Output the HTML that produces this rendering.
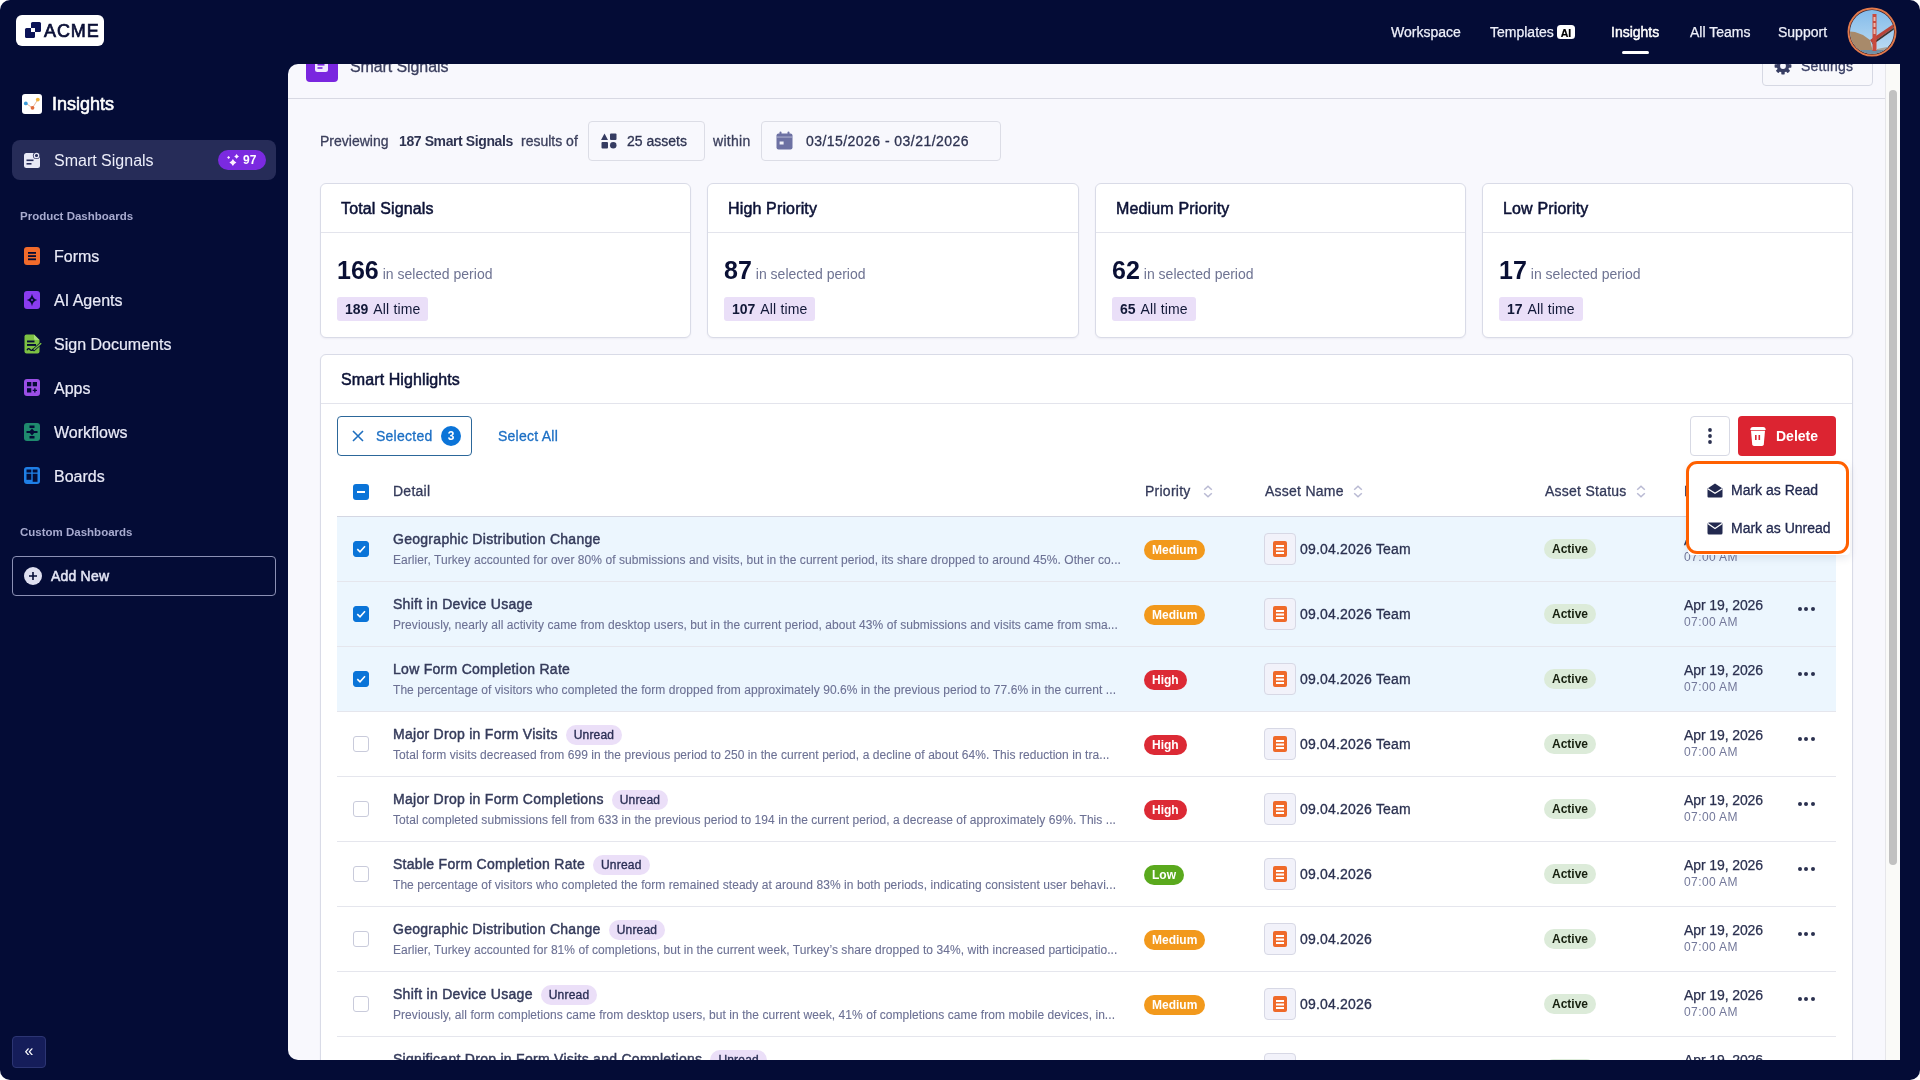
<!DOCTYPE html>
<html><head><meta charset="utf-8">
<style>
*{box-sizing:border-box;margin:0;padding:0}
html,body{width:1920px;height:1080px;overflow:hidden;background:#fff;font-family:"Liberation Sans",sans-serif}
#app{position:absolute;left:0;top:0;width:1920px;height:1080px;background:#040c36;border-radius:10px;overflow:hidden;will-change:transform}
.abs{position:absolute}
.m{-webkit-text-stroke:0.3px currentColor}
.nav{position:absolute;top:24px;-webkit-text-stroke:0.25px currentColor;font-size:14px;color:#eef0fa;white-space:nowrap;line-height:16px}
.side-item{position:absolute;left:0;width:288px;height:44px}
.side-item .ic{position:absolute;left:24px;top:13px;width:16px;height:18px;border-radius:3px}
.side-item .tx{position:absolute;left:54px;top:14px;-webkit-text-stroke:0.2px currentColor;font-size:16px;color:#e9eaf7;line-height:18px;white-space:nowrap}
.sec{position:absolute;left:20px;font-size:11.5px;font-weight:700;color:#a8abcf;white-space:nowrap}
#panel{position:absolute;left:288px;top:64px;width:1612px;height:996px;background:#f8f8fd;border-radius:10px 0 0 10px;overflow:hidden}
#pin{position:absolute;left:-288px;top:-64px;width:1920px;height:1080px}
.card{position:absolute;background:#fff;border:1px solid #d9dbe7;border-radius:6px;box-shadow:0 1px 2px rgba(20,25,70,.05)}
.stat .t{position:absolute;left:20px;top:16px;font-size:16px;color:#0c1236;white-space:nowrap;letter-spacing:0.15px;-webkit-text-stroke:0.5px currentColor}
.stat .hd{position:absolute;left:0;right:0;top:48px;border-top:1px solid #e3e4ec}
.stat .num{position:absolute;left:16px;top:71px;font-size:25px;font-weight:700;color:#0a1035;white-space:nowrap;line-height:30px}
.stat .num span{font-size:14px;font-weight:400;color:#6e7392;margin-left:4px}
.stat .pill{position:absolute;left:16px;top:113px;height:24px;padding:0 8px 0 8px;letter-spacing:0.15px;background:#eadff8;border-radius:3px;font-size:14px;line-height:24px;color:#121838;white-space:nowrap}
.stat .pill b{font-weight:700;margin-right:5px;letter-spacing:0}
.row{position:absolute;left:337px;width:1499px;height:65px;border-bottom:1px solid #e5e6ed}
.row.sel{background:#ecf6fe}
.cb{position:absolute;left:16px;top:24px;width:16px;height:16px;border-radius:3px;border:1.5px solid #c9cbdb;background:#fff}
.row.sel .cb{background:#0a74d8;border-color:#0a74d8}
.row .ti{position:absolute;left:56px;top:13px;font-size:14px;color:#353b5b;white-space:nowrap;line-height:18px;letter-spacing:0.28px;-webkit-text-stroke:0.45px currentColor}
.row .ds{position:absolute;left:56px;top:35px;width:735px;overflow:hidden;font-size:12px;color:#6c7194;white-space:nowrap;line-height:16px;letter-spacing:0.06px;-webkit-text-stroke:0.1px currentColor}
.unread{display:inline-block;margin-left:8px;height:20px;padding:0 8px;border-radius:10px;background:#ebdff8;font-size:12px;color:#2b2f55;line-height:21px;vertical-align:0px;letter-spacing:0.2px;-webkit-text-stroke:0.35px currentColor}
.prio{position:absolute;left:807px;top:23px;height:20px;border-radius:10px;color:#fff;font-size:12px;font-weight:700;line-height:20px;padding:0 8px;white-space:nowrap}
.pm{background:#f2991c}.ph{background:#dc2a35}.pl{background:#5aa91d}
.asset{position:absolute;left:927px;top:16px;width:32px;height:32px;border:1px solid #d7d8e5;background:#f2f2fa;border-radius:4px}
.asset i{position:absolute;left:8px;top:7px;width:14px;height:16px;background:#ef6a2a;border-radius:2px}
.asset i:before{content:"";position:absolute;left:3px;top:3.5px;width:8px;height:2px;background:#fff;box-shadow:0 3.5px 0 #fff,0 7px 0 #fff}
.an{position:absolute;left:963px;top:24px;letter-spacing:0.2px;-webkit-text-stroke:0.3px currentColor;font-size:14px;color:#2b3150;white-space:nowrap;line-height:16px}
.act{position:absolute;left:1207px;top:22px;width:52px;height:20px;border-radius:10px;background:#dcebd9;font-size:12px;font-weight:700;color:#17200f;text-align:center;line-height:20px}
.dt{position:absolute;left:1347px;top:15px;letter-spacing:-0.1px;-webkit-text-stroke:0.25px currentColor;font-size:14px;color:#2b3150;white-space:nowrap;line-height:16px}
.tm{position:absolute;left:1347px;top:33px;font-size:12px;color:#73789a;white-space:nowrap;line-height:14px;letter-spacing:0.4px}
.dots{position:absolute;left:1461px;top:25px;width:17px;height:4px}
.dots b{position:absolute;top:0;width:3.8px;height:3.8px;border-radius:2px;background:#2b3150}
.th{position:absolute;top:483px;letter-spacing:0.25px;-webkit-text-stroke:0.3px currentColor;font-size:14px;color:#343a5a;white-space:nowrap;line-height:16px}
.sort{position:absolute;width:10px;height:13px}
</style></head><body>
<div id="app">
  <!-- logo -->
  <div class="abs" style="left:16px;top:15px;width:88px;height:31px;background:#fff;border-radius:6px"></div>
  <svg class="abs" style="left:24px;top:21px" width="20" height="18" viewBox="0 0 20 18">
    <rect x="7" y="1" width="10" height="10" rx="1.5" fill="#0c1457"/>
    <rect x="1" y="7" width="10" height="10" rx="1.5" fill="#0c1457"/>
    <rect x="7" y="7" width="4" height="4" fill="#fff"/>
  </svg>
  <div class="abs" style="left:44px;top:20px;font-size:18px;color:#0a0f36;letter-spacing:0.9px;line-height:22px;-webkit-text-stroke:0.7px #0a0f36">ACME</div>

  <!-- top nav -->
  <div class="nav" style="left:1391px">Workspace</div>
  <div class="nav" style="left:1490px">Templates</div>
  <div class="abs" style="left:1557px;top:24.5px;width:18px;height:14.5px;background:#fff;border-radius:3.5px;font-size:10.5px;font-weight:700;color:#000;text-align:center;line-height:16px;-webkit-text-stroke:0.2px #000">AI</div>
  <div class="nav" style="left:1611px;font-size:14px;color:#fff;-webkit-text-stroke:0.45px #fff">Insights</div>
  <div class="abs" style="left:1622px;top:51px;width:27px;height:3px;background:#fff;border-radius:2px"></div>
  <div class="nav" style="left:1690px">All Teams</div>
  <div class="nav" style="left:1778px">Support</div>
  <!-- avatar -->
  <svg class="abs" style="left:1847px;top:7px" width="50" height="50" viewBox="0 0 50 50">
    <defs><clipPath id="av"><circle cx="25" cy="25" r="22"/></clipPath>
    <linearGradient id="sky" x1="0" y1="0" x2="0" y2="1"><stop offset="0" stop-color="#7fb9ea"/><stop offset="1" stop-color="#c4e0f3"/></linearGradient></defs>
    <circle cx="25" cy="25" r="24.5" fill="#e27a4c"/>
    <circle cx="25" cy="25" r="22.6" fill="#3a1a20"/>
    <g clip-path="url(#av)">
      <rect width="50" height="50" fill="url(#sky)"/>
      <polygon points="0,24 8,25 16,28 23,33 26,45 0,45" fill="#a88a6a"/>
      <polygon points="30,42 40,40 50,41 50,45 30,45" fill="#a9a49a"/>
      <rect x="0" y="43" width="50" height="7" fill="#6c8fa5"/>
      <polygon points="23,33 48,16 49,19 25,36" fill="#b8443a"/>
      <polygon points="25,36 49,19 49,21 26,37.5" fill="#40302c"/>
      <rect x="25.5" y="7" width="4" height="37" fill="#c94a3e"/>
      <rect x="26.5" y="10" width="2" height="4" fill="#e9b9b0"/>
      <rect x="26.5" y="16" width="2" height="4" fill="#e9b9b0"/>
      <rect x="26.5" y="22" width="2" height="5" fill="#e9b9b0"/>
    </g>
  </svg>

  <!-- sidebar -->
  <div class="abs" style="left:22px;top:94px;width:20px;height:20px;background:#fff;border-radius:3px">
    <svg width="20" height="20" viewBox="0 0 20 20"><path d="M3.8 9.4 L10.5 13.8 L15.8 5.6" stroke="#e9b9a0" stroke-width="1" fill="none"/><circle cx="3.8" cy="9.4" r="1.9" fill="#3a9ad9"/><circle cx="10.5" cy="13.8" r="1.9" fill="#e06a3a"/><circle cx="15.8" cy="5.6" r="1.9" fill="#f0b23a"/></svg>
  </div>
  <div class="abs" style="left:52px;top:94px;font-size:18px;color:#fff;line-height:20px;-webkit-text-stroke:0.6px #fff">Insights</div>

  <div class="abs" style="left:12px;top:140px;width:264px;height:40px;background:#262c58;border-radius:8px"></div>
  <svg class="abs" style="left:23px;top:151px" width="18" height="18" viewBox="0 0 18 18">
    <rect x="1" y="2" width="16" height="15" rx="2.5" fill="#e8e9f6"/>
    <circle cx="13.5" cy="4.5" r="3.6" fill="#262c58"/>
    <circle cx="13.5" cy="4.5" r="2.2" fill="none" stroke="#e8e9f6" stroke-width="1.3"/>
    <rect x="3.5" y="8.5" width="7" height="1.6" fill="#262c58"/>
    <rect x="3.5" y="12" width="5" height="1.6" fill="#262c58"/>
  </svg>
  <div class="abs" style="left:54px;top:152px;font-size:16px;color:#eceefa;line-height:18px">Smart Signals</div>
  <div class="abs" style="left:218px;top:150px;width:48px;height:20px;background:#7b2ae0;border-radius:10px"></div>
  <svg class="abs" style="left:225px;top:153px" width="14" height="14" viewBox="0 0 14 14"><path d="M3.6 3.0 Q4.35 3.75 5.1 4.5 Q4.35 5.25 3.6 6.0 Q2.85 5.25 2.1 4.5 Q2.85 3.75 3.6 3.0Z M11.6 1.0 Q12.44 2.56 14.0 3.4 Q12.44 4.24 11.6 5.8 Q10.76 4.24 9.2 3.4 Q10.76 2.56 11.6 1.0Z M7.9 6.1 Q8.950000000000001 8.549999999999999 11.4 9.6 Q8.950000000000001 10.65 7.9 13.1 Q6.8500000000000005 10.65 4.4 9.6 Q6.8500000000000005 8.549999999999999 7.9 6.1Z" fill="#fdf0ff"/></svg>
  <div class="abs" style="left:243px;top:153px;font-size:12px;font-weight:700;color:#fff;line-height:14px">97</div>

  <div class="sec" style="top:210px">Product Dashboards</div>

  <div class="side-item" style="top:234px"><div class="ic" style="background:#f26b2b"><svg width="16" height="18" viewBox="0 0 16 18"><rect x="4" y="5" width="8" height="1.8" fill="#040c36"/><rect x="4" y="8.2" width="8" height="1.8" fill="#040c36"/><rect x="4" y="11.4" width="8" height="1.8" fill="#040c36"/></svg></div><div class="tx">Forms</div></div>
  <div class="side-item" style="top:278px"><div class="ic" style="background:#8a3cf0"><svg width="16" height="18" viewBox="0 0 16 18"><path d="M8 2.8 Q8.9 8.1 13.3 9 Q8.9 9.9 8 15.2 Q7.1 9.9 2.7 9 Q7.1 8.1 8 2.8Z" fill="#040c36"/><circle cx="8" cy="9" r="0.9" fill="#8a3cf0"/></svg></div><div class="tx">AI Agents</div></div>
  <div class="side-item" style="top:322px"><svg class="abs" style="left:24px;top:12px" width="19" height="20" viewBox="0 0 19 20"><path d="M2.5 0.5 H10 L15.5 6 V17.5 Q15.5 19.5 13.5 19.5 H2.5 Q0.5 19.5 0.5 17.5 V2.5 Q0.5 0.5 2.5 0.5Z" fill="#7cc143"/><path d="M10 0.5 V4.5 Q10 6 11.5 6 H15.5" fill="#a6dd78"/><rect x="3" y="6.5" width="7.5" height="1.9" fill="#040c36"/><rect x="3" y="10" width="9" height="1.9" fill="#040c36"/><path d="M3 16.3 Q4.5 13.5 6 15.5 T9.5 15" stroke="#040c36" stroke-width="1.3" fill="none"/><path d="M9 16.5 L17.5 9" stroke="#040c36" stroke-width="3"/><path d="M9.8 15.8 L17.2 9.3" stroke="#7cc143" stroke-width="1.4"/></svg><div class="tx">Sign Documents</div></div>
  <div class="side-item" style="top:366px"><div class="ic" style="background:#9b4fe6;height:17px;top:13px"><svg width="16" height="17" viewBox="0 0 16 17"><rect x="3" y="3" width="4.3" height="4.3" fill="#040c36"/><rect x="8.7" y="3" width="4.3" height="4.3" fill="#040c36"/><rect x="3" y="9.2" width="4.3" height="4.3" fill="#040c36"/><path d="M10.85 9.2 V13.5 M8.7 11.35 H13" stroke="#040c36" stroke-width="1.4"/></svg></div><div class="tx">Apps</div></div>
  <div class="side-item" style="top:410px"><div class="ic" style="background:#1f8a6e"><svg width="16" height="18" viewBox="0 0 16 18"><rect x="5.5" y="2.5" width="5" height="2.5" fill="#040c36"/><rect x="2.5" y="8" width="11" height="2" fill="#040c36"/><path d="M8 5.5 L11 9 L8 12.5 L5 9Z" fill="#040c36"/><rect x="5.5" y="13" width="5" height="2.5" fill="#040c36"/></svg></div><div class="tx">Workflows</div></div>
  <div class="side-item" style="top:454px"><div class="ic" style="background:#1f7fe6;height:17px"><svg width="16" height="17" viewBox="0 0 16 17"><rect x="2.5" y="2.5" width="4.8" height="3" fill="#040c36"/><rect x="8.7" y="2.5" width="4.8" height="3" fill="#040c36"/><rect x="2.5" y="6.8" width="4.8" height="6" fill="#040c36"/><rect x="8.7" y="6.8" width="4.8" height="8" fill="#040c36"/></svg></div><div class="tx">Boards</div></div>

  <div class="sec" style="top:526px">Custom Dashboards</div>
  <div class="abs" style="left:12px;top:556px;width:264px;height:40px;border:1px solid #8b90b4;border-radius:4px"></div>
  <svg class="abs" style="left:24px;top:567px" width="18" height="18" viewBox="0 0 18 18"><circle cx="9" cy="9" r="9" fill="#dfe0f0"/><path d="M9 5 V13 M5 9 H13" stroke="#040c36" stroke-width="1.6"/></svg>
  <div class="abs" style="left:51px;top:568px;font-size:14px;color:#e3e5f5;line-height:16px;letter-spacing:0.2px;-webkit-text-stroke:0.5px #e3e5f5">Add New</div>

  <div class="abs" style="left:12px;top:1036px;width:34px;height:32px;background:#151d5a;border:1px solid #2c3573;border-radius:4px;color:#fff;font-size:16px;text-align:center;line-height:28px">&laquo;</div>

  <!-- main panel -->
  <div id="panel"><div id="pin">
    <!-- header -->
    <div class="abs" style="left:288px;top:0;width:1597px;height:99px;border-bottom:1px solid #d8d9e3"></div>
    <div class="abs" style="left:306px;top:50px;width:32px;height:32px;background:#7a26df;border-radius:4px"></div>
    <svg class="abs" style="left:313px;top:57px" width="18" height="18" viewBox="0 0 18 18"><rect x="2" y="2" width="13" height="13" rx="2.5" fill="#f0e7ff"/><rect x="4.5" y="7" width="7" height="1.6" fill="#7a26df"/><rect x="4.5" y="10.2" width="5" height="1.6" fill="#7a26df"/></svg>
    <div class="abs m" style="left:350px;top:57px;font-size:16px;color:#3a3e5e;line-height:20px;letter-spacing:-0.1px">Smart Signals</div>
    <div class="abs" style="left:1762px;top:40px;width:111px;height:46px;border:1px solid #d6d8e3;border-radius:4px;background:#f8f8fc"></div>
    <svg class="abs" style="left:1774px;top:57px" width="18" height="18" viewBox="0 0 18 18"><rect x="7.3" y="0.6" width="3.4" height="3.4" rx="0.6" fill="#373d63" transform="rotate(0 9 9)"/><rect x="7.3" y="0.6" width="3.4" height="3.4" rx="0.6" fill="#373d63" transform="rotate(45 9 9)"/><rect x="7.3" y="0.6" width="3.4" height="3.4" rx="0.6" fill="#373d63" transform="rotate(90 9 9)"/><rect x="7.3" y="0.6" width="3.4" height="3.4" rx="0.6" fill="#373d63" transform="rotate(135 9 9)"/><rect x="7.3" y="0.6" width="3.4" height="3.4" rx="0.6" fill="#373d63" transform="rotate(180 9 9)"/><rect x="7.3" y="0.6" width="3.4" height="3.4" rx="0.6" fill="#373d63" transform="rotate(225 9 9)"/><rect x="7.3" y="0.6" width="3.4" height="3.4" rx="0.6" fill="#373d63" transform="rotate(270 9 9)"/><rect x="7.3" y="0.6" width="3.4" height="3.4" rx="0.6" fill="#373d63" transform="rotate(315 9 9)"/><circle cx="9" cy="9" r="6.3" fill="#373d63"/><circle cx="9" cy="9" r="2.9" fill="#f8f8fd"/></svg>
    <div class="abs m" style="left:1801px;top:57px;font-size:14px;color:#373d63;line-height:18px;letter-spacing:0.2px">Settings</div>
    <!-- scrollbar -->
    <div class="abs" style="left:1885px;top:64px;width:15px;height:996px;background:#fafaf8;border-left:1px solid #e6e6ea"></div>
    <div class="abs" style="left:1889px;top:90px;width:8px;height:775px;background:#c1c1c1;border-radius:4px"></div>

    <!-- preview row -->
    <div class="abs m" style="left:320px;top:133px;font-size:14px;color:#3b3f5c;line-height:16px;white-space:nowrap">Previewing</div>
    <div class="abs" style="left:399px;top:133px;font-size:14px;font-weight:700;color:#2f3452;line-height:16px;white-space:nowrap;letter-spacing:-0.4px">187 Smart Signals</div>
    <div class="abs m" style="left:521px;top:133px;font-size:14px;color:#3b3f5c;line-height:16px;white-space:nowrap">results of</div>
    <div class="abs" style="left:588px;top:121px;width:117px;height:40px;border:1px solid #dcdde6;border-radius:4px"></div>
    <svg class="abs" style="left:601px;top:133px" width="16" height="16" viewBox="0 0 16 16"><path d="M3.5 0.5 L7 7 H0Z" fill="#363c62"/><rect x="9" y="0.5" width="6.5" height="6.5" rx="1" fill="#363c62"/><rect x="0.5" y="9" width="6.5" height="6.5" rx="1" fill="#363c62"/><circle cx="12.25" cy="12.25" r="3.25" fill="#363c62"/></svg>
    <div class="abs m" style="left:627px;top:133px;font-size:14px;color:#2f3452;line-height:16px;white-space:nowrap">25 assets</div>
    <div class="abs m" style="left:713px;top:133px;font-size:14px;color:#3b3f5c;line-height:16px;white-space:nowrap;letter-spacing:0.3px">within</div>
    <div class="abs" style="left:761px;top:121px;width:240px;height:40px;border:1px solid #dcdde6;border-radius:4px"></div>
    <svg class="abs" style="left:776px;top:131px" width="17" height="19" viewBox="0 0 17 19"><rect x="0.5" y="2.5" width="16" height="16" rx="2" fill="#6d71a3"/><rect x="3.5" y="0.5" width="2" height="4" rx="1" fill="#6d71a3"/><rect x="11.5" y="0.5" width="2" height="4" rx="1" fill="#6d71a3"/><rect x="0.5" y="5.6" width="16" height="0.9" fill="#b9bbd6"/><rect x="3.6" y="10.5" width="4" height="3" fill="#f0f0f8"/></svg>
    <div class="abs m" style="left:806px;top:133px;font-size:14px;color:#2f3452;line-height:16px;white-space:nowrap;letter-spacing:0.45px">03/15/2026 - 03/21/2026</div>

    <!-- stat cards -->
    <div class="card stat" style="left:320px;top:183px;width:371px;height:155px"><div class="t">Total Signals</div><div class="hd"></div><div class="num">166<span>in selected period</span></div><div class="pill"><b>189</b>All time</div></div>
    <div class="card stat" style="left:707px;top:183px;width:372px;height:155px"><div class="t">High Priority</div><div class="hd"></div><div class="num">87<span>in selected period</span></div><div class="pill"><b>107</b>All time</div></div>
    <div class="card stat" style="left:1095px;top:183px;width:371px;height:155px"><div class="t">Medium Priority</div><div class="hd"></div><div class="num">62<span>in selected period</span></div><div class="pill"><b>65</b>All time</div></div>
    <div class="card stat" style="left:1482px;top:183px;width:371px;height:155px"><div class="t">Low Priority</div><div class="hd"></div><div class="num">17<span>in selected period</span></div><div class="pill"><b>17</b>All time</div></div>

    <!-- highlights card -->
    <div class="card" style="left:320px;top:354px;width:1533px;height:800px"></div>
    <div class="abs" style="left:341px;top:371px;font-size:16px;color:#0c1236;line-height:18px;letter-spacing:0.1px;-webkit-text-stroke:0.5px #0c1236">Smart Highlights</div>
    <div class="abs" style="left:321px;top:403px;width:1531px;border-top:1px solid #e3e4ec"></div>

    <div class="abs" style="left:337px;top:416px;width:135px;height:40px;border:1.5px solid #2c679a;border-radius:4px;background:#fff"></div>
    <svg class="abs" style="left:352px;top:430px" width="12" height="12" viewBox="0 0 12 12"><path d="M1 1 L11 11 M11 1 L1 11" stroke="#1f6fbf" stroke-width="1.6"/></svg>
    <div class="abs m" style="left:376px;top:428px;font-size:14px;color:#1c6fc4;line-height:16px;letter-spacing:0.25px">Selected</div>
    <div class="abs" style="left:441px;top:426px;width:20px;height:20px;border-radius:50%;background:#0b74d8;color:#fff;font-size:12px;font-weight:700;text-align:center;line-height:20px">3</div>
    <div class="abs m" style="left:498px;top:428px;font-size:14px;color:#1c6fc4;line-height:16px;letter-spacing:0.25px">Select All</div>

    <div class="abs" style="left:1690px;top:416px;width:40px;height:40px;border:1px solid #d7d9e4;border-radius:4px;background:#fff"></div>
    <svg class="abs" style="left:1706px;top:427px" width="8" height="18" viewBox="0 0 8 18"><circle cx="4" cy="3" r="1.9" fill="#2b3150"/><circle cx="4" cy="9" r="1.9" fill="#2b3150"/><circle cx="4" cy="15" r="1.9" fill="#2b3150"/></svg>
    <div class="abs" style="left:1738px;top:416px;width:98px;height:40px;background:#dc2431;border-radius:4px"></div>
    <svg class="abs" style="left:1750px;top:426px" width="16" height="20" viewBox="0 0 16 20"><path d="M0.3 4 Q0.3 1.2 3 1 H13 Q15.7 1.2 15.7 4Z" fill="#fff"/><path d="M1 4.8 H15 L13.8 18.3 Q13.6 20 12 20 H4 Q2.4 20 2.2 18.3Z" fill="#fff"/><rect x="5" y="9" width="1.6" height="5" fill="#dc2431"/><rect x="8.5" y="9" width="1.6" height="5" fill="#dc2431"/></svg>
    <div class="abs" style="left:1776px;top:427px;font-size:14px;font-weight:700;color:#fff;line-height:18px">Delete</div>

    <!-- table header -->
    <div class="abs" style="left:353px;top:484px;width:16px;height:16px;border-radius:3px;background:#0a74d8"></div>
    <div class="abs" style="left:357px;top:491px;width:8px;height:2px;background:#fff"></div>
    <div class="th" style="left:393px">Detail</div>
    <div class="th" style="left:1145px">Priority</div>
    <svg class="sort" style="left:1203px;top:485px" viewBox="0 0 10 13"><path d="M1.2 4.8 L5 1.2 L8.8 4.8 M1.2 8.2 L5 11.8 L8.8 8.2" stroke="#b9bad3" stroke-width="1.5" fill="none"/></svg>
    <div class="th" style="left:1265px">Asset Name</div>
    <svg class="sort" style="left:1353px;top:485px" viewBox="0 0 10 13"><path d="M1.2 4.8 L5 1.2 L8.8 4.8 M1.2 8.2 L5 11.8 L8.8 8.2" stroke="#b9bad3" stroke-width="1.5" fill="none"/></svg>
    <div class="th" style="left:1545px">Asset Status</div>
    <svg class="sort" style="left:1636px;top:485px" viewBox="0 0 10 13"><path d="M1.2 4.8 L5 1.2 L8.8 4.8 M1.2 8.2 L5 11.8 L8.8 8.2" stroke="#b9bad3" stroke-width="1.5" fill="none"/></svg>
    <div class="th" style="left:1684px">Date</div>
    <div class="abs" style="left:337px;top:516px;width:1499px;border-top:1px solid #d4d7e3"></div>

    <div id="rows"></div>
    <div class="row sel" style="top:517px"><div class="cb"><svg style="position:absolute;left:0.5px;top:0.5px" width="12" height="12" viewBox="0 0 12 12"><path d="M2.3 6.2 L5 8.8 L10 3.3" stroke="#fff" stroke-width="1.6" fill="none"/></svg></div><div class="ti">Geographic Distribution Change</div><div class="ds">Earlier, Turkey accounted for over 80% of submissions and visits, but in the current period, its share dropped to around 45%. Other co...</div><div class="prio pm">Medium</div><div class="asset"><i></i></div><div class="an">09.04.2026 Team</div><div class="act">Active</div><div class="dt">Apr 19, 2026</div><div class="tm">07:00 AM</div><div class="dots"><b style="left:0"></b><b style="left:6.4px"></b><b style="left:12.8px"></b></div></div>
<div class="row sel" style="top:582px"><div class="cb"><svg style="position:absolute;left:0.5px;top:0.5px" width="12" height="12" viewBox="0 0 12 12"><path d="M2.3 6.2 L5 8.8 L10 3.3" stroke="#fff" stroke-width="1.6" fill="none"/></svg></div><div class="ti">Shift in Device Usage</div><div class="ds">Previously, nearly all activity came from desktop users, but in the current period, about 43% of submissions and visits came from sma...</div><div class="prio pm">Medium</div><div class="asset"><i></i></div><div class="an">09.04.2026 Team</div><div class="act">Active</div><div class="dt">Apr 19, 2026</div><div class="tm">07:00 AM</div><div class="dots"><b style="left:0"></b><b style="left:6.4px"></b><b style="left:12.8px"></b></div></div>
<div class="row sel" style="top:647px"><div class="cb"><svg style="position:absolute;left:0.5px;top:0.5px" width="12" height="12" viewBox="0 0 12 12"><path d="M2.3 6.2 L5 8.8 L10 3.3" stroke="#fff" stroke-width="1.6" fill="none"/></svg></div><div class="ti">Low Form Completion Rate</div><div class="ds">The percentage of visitors who completed the form dropped from approximately 90.6% in the previous period to 77.6% in the current ...</div><div class="prio ph">High</div><div class="asset"><i></i></div><div class="an">09.04.2026 Team</div><div class="act">Active</div><div class="dt">Apr 19, 2026</div><div class="tm">07:00 AM</div><div class="dots"><b style="left:0"></b><b style="left:6.4px"></b><b style="left:12.8px"></b></div></div>
<div class="row" style="top:712px"><div class="cb"></div><div class="ti">Major Drop in Form Visits<span class="unread">Unread</span></div><div class="ds">Total form visits decreased from 699 in the previous period to 250 in the current period, a decline of about 64%. This reduction in tra...</div><div class="prio ph">High</div><div class="asset"><i></i></div><div class="an">09.04.2026 Team</div><div class="act">Active</div><div class="dt">Apr 19, 2026</div><div class="tm">07:00 AM</div><div class="dots"><b style="left:0"></b><b style="left:6.4px"></b><b style="left:12.8px"></b></div></div>
<div class="row" style="top:777px"><div class="cb"></div><div class="ti">Major Drop in Form Completions<span class="unread">Unread</span></div><div class="ds">Total completed submissions fell from 633 in the previous period to 194 in the current period, a decrease of approximately 69%. This ...</div><div class="prio ph">High</div><div class="asset"><i></i></div><div class="an">09.04.2026 Team</div><div class="act">Active</div><div class="dt">Apr 19, 2026</div><div class="tm">07:00 AM</div><div class="dots"><b style="left:0"></b><b style="left:6.4px"></b><b style="left:12.8px"></b></div></div>
<div class="row" style="top:842px"><div class="cb"></div><div class="ti">Stable Form Completion Rate<span class="unread">Unread</span></div><div class="ds">The percentage of visitors who completed the form remained steady at around 83% in both periods, indicating consistent user behavi...</div><div class="prio pl">Low</div><div class="asset"><i></i></div><div class="an">09.04.2026</div><div class="act">Active</div><div class="dt">Apr 19, 2026</div><div class="tm">07:00 AM</div><div class="dots"><b style="left:0"></b><b style="left:6.4px"></b><b style="left:12.8px"></b></div></div>
<div class="row" style="top:907px"><div class="cb"></div><div class="ti">Geographic Distribution Change<span class="unread">Unread</span></div><div class="ds">Earlier, Turkey accounted for 81% of completions, but in the current week, Turkey’s share dropped to 34%, with increased participatio...</div><div class="prio pm">Medium</div><div class="asset"><i></i></div><div class="an">09.04.2026</div><div class="act">Active</div><div class="dt">Apr 19, 2026</div><div class="tm">07:00 AM</div><div class="dots"><b style="left:0"></b><b style="left:6.4px"></b><b style="left:12.8px"></b></div></div>
<div class="row" style="top:972px"><div class="cb"></div><div class="ti">Shift in Device Usage<span class="unread">Unread</span></div><div class="ds">Previously, all form completions came from desktop users, but in the current week, 41% of completions came from mobile devices, in...</div><div class="prio pm">Medium</div><div class="asset"><i></i></div><div class="an">09.04.2026</div><div class="act">Active</div><div class="dt">Apr 19, 2026</div><div class="tm">07:00 AM</div><div class="dots"><b style="left:0"></b><b style="left:6.4px"></b><b style="left:12.8px"></b></div></div>
<div class="row" style="top:1037px"><div class="cb"></div><div class="ti">Significant Drop in Form Visits and Completions<span class="unread">Unread</span></div><div class="ds">Visits and completions dropped significantly compared to the previous period...</div><div class="prio ph">High</div><div class="asset"><i></i></div><div class="an">09.04.2026</div><div class="act">Active</div><div class="dt">Apr 19, 2026</div><div class="tm">07:00 AM</div><div class="dots"><b style="left:0"></b><b style="left:6.4px"></b><b style="left:12.8px"></b></div></div>

    <!-- dropdown -->
    <div class="abs" style="left:1688px;top:463px;width:162px;height:92px;background:#fff;border-radius:4px;box-shadow:0 3px 8px rgba(30,35,80,.10)"></div>
    <div class="abs" style="left:1686px;top:461px;width:163px;height:93px;border:3px solid #ff6000;border-radius:11px;background:#fff"></div>
    <svg class="abs" style="left:1707px;top:483px" width="16" height="15" viewBox="0 0 16 15"><path d="M0.5 5.5 L8 0.5 L15.5 5.5 V13.5 Q15.5 14.5 14.5 14.5 H1.5 Q0.5 14.5 0.5 13.5Z" fill="#22294f"/><path d="M0.8 5.8 L8 10.3 L15.2 5.8" stroke="#fff" stroke-width="1.3" fill="none"/></svg>
    <div class="abs m" style="left:1731px;top:482px;font-size:14px;color:#22294f;line-height:16px;white-space:nowrap">Mark as Read</div>
    <svg class="abs" style="left:1707px;top:522px" width="16" height="13" viewBox="0 0 16 13"><rect x="0.5" y="0.5" width="15" height="12" rx="1.5" fill="#22294f"/><path d="M0.8 1.5 L8 6.5 L15.2 1.5" stroke="#fff" stroke-width="1.3" fill="none"/></svg>
    <div class="abs m" style="left:1731px;top:520px;font-size:14px;color:#22294f;line-height:16px;white-space:nowrap">Mark as Unread</div>
  </div></div>
</div>
</body></html>
